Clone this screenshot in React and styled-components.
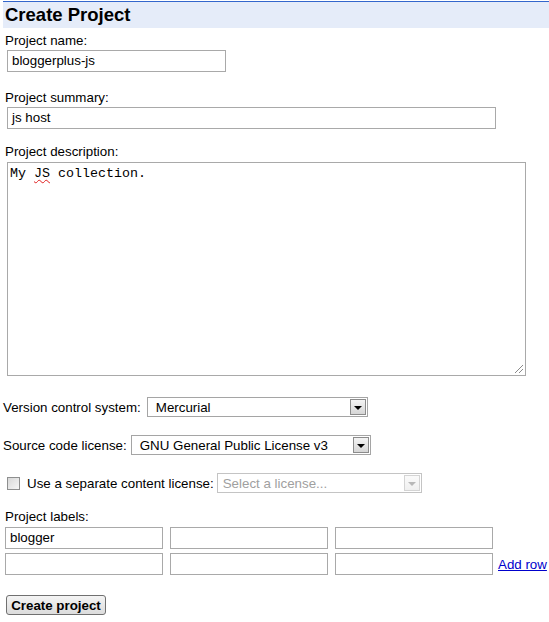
import React from 'react'
import styled, { createGlobalStyle } from 'styled-components';

const GlobalStyle = createGlobalStyle`
  html, body {
    margin: 0;
    padding: 0;
    background: #ffffff;
  }
  body {
    font-family: "Liberation Sans", Arial, sans-serif;
    font-size: 13.33px;
    color: #000;
  }
  * {
    box-sizing: border-box;
  }
`;

const Page = styled.div`
  width: 549px;
  height: 622px;
  display: flex;
  flex-direction: column;
`;

const Header = styled.h1`
  margin: 1px 0 0 3px;
  height: 27px;
  border-top: 1px solid #3366cc;
  background-color: #e5ecf9;
  padding-left: 2px;
  font-size: 18.5px;
  font-weight: bold;
  line-height: 25px;
`;

const Label = styled.div`
  line-height: 16px;
  margin-top: ${p => p.$top || 0}px;
  padding-left: ${p => p.$left || 5}px;
`;

const TextInput = styled.div`
  height: 22px;
  width: ${p => p.$width}px;
  margin-left: ${p => p.$left || 0}px;
  margin-top: ${p => p.$top || 0}px;
  border: 1px solid #a9a9a9;
  padding: 0 4px;
  line-height: 20px;
  white-space: nowrap;
  overflow: hidden;
`;

const Description = styled.div`
  position: relative;
  width: 519px;
  height: 214px;
  margin: 2px 0 0 7px;
  border: 1px solid #a9a9a9;
  padding: 3px 2px;
  font-family: "Liberation Mono", "Courier New", monospace;
  font-size: 13.33px;
  line-height: 16px;
`;

const Misspelled = styled.span`
  text-decoration: underline wavy #e02020;
  text-decoration-thickness: 1px;
  text-underline-offset: 2px;
`;

const Grip = styled.svg`
  position: absolute;
  right: 1px;
  bottom: 1px;
`;

const Row = styled.div`
  display: flex;
  align-items: center;
  height: 20px;
  margin-top: ${p => p.$top || 0}px;
  padding-left: ${p => p.$left || 3}px;
  gap: ${p => p.$gap || 6}px;
  white-space: nowrap;
`;

const SelectBox = styled.div`
  position: relative;
  flex: none;
  display: flex;
  align-items: center;
  width: ${p => p.$width}px;
  height: 20px;
  border: 1px solid ${p => (p.$disabled ? '#c4c4c4' : '#a5a5a5')};
  padding-left: ${p => p.$pad || 8}px;
  color: ${p => (p.$disabled ? '#a0a0a0' : '#000')};
  white-space: nowrap;
`;

const ArrowButton = styled.span`
  position: absolute;
  right: 1px;
  top: 1px;
  width: 16px;
  height: 16px;
  border: 1px solid ${p => (p.$disabled ? '#d4d4d4' : '#8c8c8c')};
  background: ${p => (p.$disabled
    ? 'linear-gradient(#fafafa, #f0f0f0)'
    : 'linear-gradient(#f4f4f4, #d6d6d6)')};
  display: flex;
  align-items: center;
  justify-content: center;
`;

const Triangle = styled.span`
  width: 0;
  height: 0;
  border-left: 4px solid transparent;
  border-right: 4px solid transparent;
  border-top: 4px solid ${p => (p.$disabled ? '#b8b8b8' : '#000')};
  margin-top: 1px;
`;

const CheckBox = styled.span`
  flex: none;
  width: 13px;
  height: 13px;
  border: 1px solid #8e8f8f;
  background: linear-gradient(135deg, #d8d8d8, #f6f6f6);
  margin-left: 4px;
  margin-right: 4px;
`;

const LabelsGrid = styled.div`
  display: grid;
  grid-template-columns: 158px 158px 158px auto;
  column-gap: 7px;
  row-gap: 4px;
  margin: 2px 0 0 5px;
  align-items: end;
`;

const AddRow = styled.a`
  color: #0000cc;
  text-decoration: underline;
  margin-left: -2px;
  line-height: 16px;
  padding-bottom: 2px;
  cursor: pointer;
`;

const Button = styled.button`
  align-self: flex-start;
  margin: 20px 0 0 6px;
  width: 100px;
  height: 20px;
  padding: 0;
  border: 1px solid #707070;
  border-radius: 3px;
  background: linear-gradient(#f4f4f4, #dcdcdc);
  font-family: "Liberation Sans", Arial, sans-serif;
  font-size: 13.33px;
  font-weight: bold;
  color: #000;
`;

const Select = ({ width, pad, disabled, children }) => (
  <SelectBox $width={width} $pad={pad} $disabled={disabled}>
    {children}
    <ArrowButton $disabled={disabled}>
      <Triangle $disabled={disabled} />
    </ArrowButton>
  </SelectBox>
);

const App = () => {
  return (
    <Page>
      <GlobalStyle />
      <Header>Create Project</Header>

      <Label $top={5}>Project name:</Label>
      <TextInput $width={219} $left={7} $top={1}>bloggerplus-js</TextInput>

      <Label $top={18}>Project summary:</Label>
      <TextInput $width={489} $left={7} $top={1}>js host</TextInput>

      <Label $top={15}>Project description:</Label>
      <Description>
        My <Misspelled>JS</Misspelled> collection.
        <Grip width="12" height="12" viewBox="0 0 12 12">
          <path d="M11 3 L3 11 M11 7 L7 11" stroke="#8a8a8a" strokeWidth="1" />
        </Grip>
      </Description>

      <Row $top={21} $left={3} $gap={6}>
        Version control system:
        <Select width={221}>Mercurial</Select>
      </Row>

      <Row $top={18} $left={3} $gap={4}>
        Source code license:
        <Select width={240}>GNU General Public License v3</Select>
      </Row>

      <Row $top={18} $left={3} $gap={3}>
        <CheckBox />
        Use a separate content license:
        <Select width={205} pad={5} disabled>Select a license...</Select>
      </Row>

      <Label $top={16}>Project labels:</Label>
      <LabelsGrid>
        <TextInput $width={158}>blogger</TextInput>
        <TextInput $width={158} />
        <TextInput $width={158} />
        <span />
        <TextInput $width={158} />
        <TextInput $width={158} />
        <TextInput $width={158} />
        <AddRow>Add row</AddRow>
      </LabelsGrid>

      <Button>Create project</Button>
    </Page>
  )
}

export default App
